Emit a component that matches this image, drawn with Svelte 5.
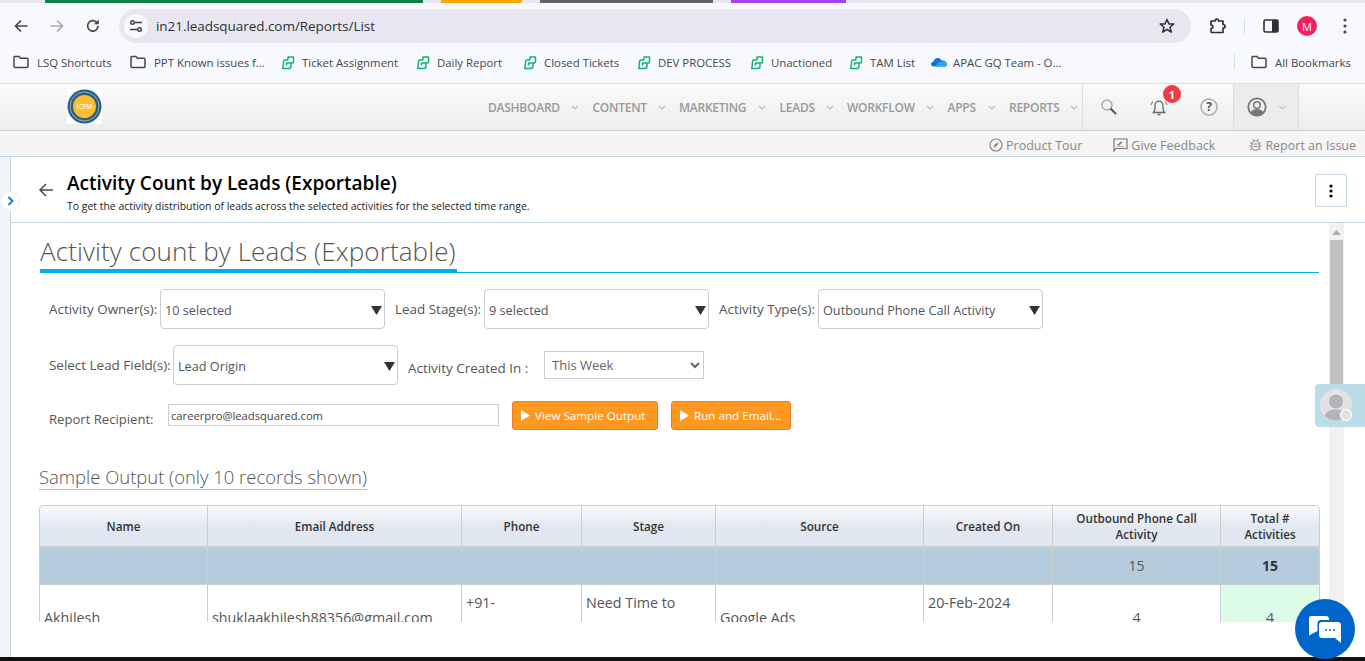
<script>
  const bookmarks = [
    { t: 'LSQ Shortcuts', i: 'folder', w: 74, g: 19 },
    { t: 'PPT Known issues f...', i: 'folder', w: 110, g: 15 },
    { t: 'Ticket Assignment', i: 'green', w: 96, g: 16 },
    { t: 'Daily Report', i: 'green', w: 65, g: 19 },
    { t: 'Closed Tickets', i: 'green', w: 75, g: 16 },
    { t: 'DEV PROCESS', i: 'green', w: 74, g: 16 },
    { t: 'Unactioned', i: 'green', w: 60, g: 16 },
    { t: 'TAM List', i: 'green', w: 45, g: 16 },
    { t: 'APAC GQ Team - O...', i: 'cloud', w: 110, g: 0 }
  ];
  const nav = [
    { t: 'DASHBOARD', w: 72 }, { t: 'CONTENT', w: 54 }, { t: 'MARKETING', w: 68 }, { t: 'LEADS', w: 35 },
    { t: 'WORKFLOW', w: 68 }, { t: 'APPS', w: 29 }, { t: 'REPORTS', w: 50 }
  ];
  const cols = [168, 254, 120, 134, 208, 129, 168, 98];
  const heads = ['Name', 'Email Address', 'Phone', 'Stage', 'Source', 'Created On', 'Outbound Phone Call Activity', 'Total # Activities'];
</script>

{#snippet folder()}
  <svg class="bmi" width="16" height="16" viewBox="0 0 16 16"><path d="M1 3.500C1 2.900 1.400 2.500 2 2.500H6L7.500 4.200H14C14.600 4.200 15 4.600 15 5.200V12.500C15 13.100 14.600 13.500 14 13.500H2C1.400 13.500 1 13.100 1 12.500Z" fill="none" stroke="#45474d" stroke-width="1.500"/></svg>
{/snippet}
{#snippet green()}
  <svg class="bmi gr" width="16" height="16" viewBox="0 0 16 16"><path d="M9 6V3H14.500V7.500C14.500 8.500 14 9 13 9H7.500V11.500M9 6H6.200C5.200 6 4.700 6.500 4.600 7.500L3.800 14.500H9.500C11 14.500 12 13.500 12 12V9" fill="none" stroke="#12b36f" stroke-width="1.500" stroke-linejoin="round"/></svg>
{/snippet}
{#snippet cloud()}
  <svg class="bmi cl" width="16" height="16" viewBox="0 0 16 16"><path d="M3 12.500C1 12.500 0 11.300 0 10C0 8.700 1 7.800 2.300 7.700C2.900 5.500 4.700 4 6.800 4C8.500 4 10 5 10.700 6.500C13.500 6.300 16 8 16 10.500C16 11.700 15.200 12.500 14 12.500Z" fill="#0f78d4"/><path d="M6 12.500C5 11 6 8.500 8.500 8.500C9.500 7.500 11.500 7 13 7.500C15 8 16 9.300 16 10.500C16 11.700 15.200 12.500 14 12.500Z" fill="#28a8ea"/></svg>
{/snippet}
{#snippet tri()}
  <svg class="tri" width="11" height="9" viewBox="0 0 11 9"><path d="M0 0H11L5.500 9Z" fill="#333"/></svg>
{/snippet}
{#snippet play()}
  <svg class="play" width="9" height="11" viewBox="0 0 9 11"><path d="M0 0L9 5.500L0 11Z" fill="#fff"/></svg>
{/snippet}

<div class="page">
  <div class="tabs">
    <i class="seg s1"></i><i class="seg s2"></i><i class="seg s3"></i><i class="seg s4"></i>
  </div>
  <div class="chrome">
    <div class="toolbar">
      <svg class="ci back" width="16" height="16" viewBox="0 0 16 16"><path d="M14.500 8H2.500M8 2.500L2.500 8L8 13.500" fill="none" stroke="#45474d" stroke-width="1.700"/></svg>
      <svg class="ci fwd" width="16" height="16" viewBox="0 0 16 16"><path d="M1.500 8H13.500M8 2.500L13.500 8L8 13.500" fill="none" stroke="#a9a9ae" stroke-width="1.700"/></svg>
      <svg class="ci rel" width="16" height="16" viewBox="0 0 16 16"><path d="M13 8A5.200 5.200 0 1 1 11.600 4.300" fill="none" stroke="#45474d" stroke-width="1.700"/><path d="M13.800 1.500V6.300H9Z" fill="#45474d"/></svg>
      <div class="omni">
        <span class="tune">
          <svg width="16" height="16" viewBox="0 0 16 16"><circle cx="4.500" cy="4.500" r="1.800" fill="none" stroke="#3f4046" stroke-width="1.400"/><path d="M7 4.500H14M2 11.500H9" stroke="#3f4046" stroke-width="1.400"/><circle cx="11.500" cy="11.500" r="1.800" fill="none" stroke="#3f4046" stroke-width="1.400"/></svg>
        </span>
        <span class="url">in21.leadsquared.com/Reports/List</span>
        <svg class="star" width="16" height="16" viewBox="0 0 16 16"><path d="M8 1.500L10 6H14.800L11 9.200L12.300 14.200L8 11.500L3.700 14.200L5 9.200L1.200 6H6Z" fill="none" stroke="#2f3036" stroke-width="1.500" stroke-linejoin="round"/></svg>
      </div>
      <svg class="ci puzzle" width="18" height="18" viewBox="0 0 18 18"><path d="M2 4H6C6 1.500 9.500 1.500 9.500 4H14V7.500C16.800 7.500 16.800 11 14 11V15.500H3C2.400 15.500 2 15.100 2 14.500V11.500C4.500 11.500 4.500 8 2 8Z" fill="none" stroke="#2f3036" stroke-width="1.700" stroke-linejoin="round"/></svg>
      <i class="tsep"></i>
      <svg class="ci panel" width="16" height="16" viewBox="0 0 16 16"><rect x="1" y="2" width="14" height="12" rx="1.500" fill="none" stroke="#2f3036" stroke-width="1.600"/><rect x="9" y="2" width="6" height="12" fill="#2f3036"/></svg>
      <span class="avatar">M</span>
      <svg class="ci dots" width="4" height="16" viewBox="0 0 4 16"><circle cx="2" cy="2" r="1.600" fill="#45474d"/><circle cx="2" cy="8" r="1.600" fill="#45474d"/><circle cx="2" cy="14" r="1.600" fill="#45474d"/></svg>
    </div>
    <div class="bookmarks">
      {#each bookmarks as b}
        <div class="bm" style="margin-right:{b.g}px">
          {#if b.i === 'folder'}{@render folder()}{:else if b.i === 'green'}{@render green()}{:else}{@render cloud()}{/if}
          <span class="bmt" style="width:{b.w}px">{b.t}</span>
        </div>
      {/each}
      <i class="bsep"></i>
      <div class="bm">{@render folder()}<span class="bmt">All Bookmarks</span></div>
    </div>
  </div>

  <header class="appnav">
    <div class="logo">
      <svg width="35" height="35" viewBox="0 0 35 35"><circle cx="17.500" cy="17.500" r="17" fill="#1f5f9a"/><circle cx="17.500" cy="17.500" r="14.500" fill="none" stroke="#d8c25a" stroke-width="0.800"/><circle cx="17.500" cy="17.500" r="11.500" fill="#fdbb2d"/><text x="17.500" y="20" text-anchor="middle" class="logot">ICFM</text></svg>
    </div>
    <nav class="menu">
      {#each nav as n}
        <div class="mi">
          <span class="mt" style="width:{n.w}px">{n.t}</span>
          <svg width="8" height="5" viewBox="0 0 8 5"><path d="M1 1L4 4L7 1" fill="none" stroke="#bbb" stroke-width="1.200"/></svg>
        </div>
      {/each}
    </nav>
    <div class="tools">
      <span class="tool t-search">
        <svg width="18" height="18" viewBox="0 0 18 18"><circle cx="7" cy="7" r="5" fill="none" stroke="#aaa" stroke-width="1.500"/><path d="M10.500 10.500L16 16" stroke="#555" stroke-width="2"/></svg>
      </span>
      <span class="tool t-bell">
        <svg width="20" height="20" viewBox="0 0 20 20"><path d="M4.500 15.500C5.500 14.500 6 13.500 6 11V8.500C6 6 7.800 4.200 10 4.200C12.200 4.200 14 6 14 8.500V11C14 13.500 14.500 14.500 15.500 15.500Z" fill="none" stroke="#666" stroke-width="1.300"/><path d="M8.500 17.500H11.500" stroke="#666" stroke-width="1.500"/><path d="M3.800 4.500L1.800 8M16.200 4.500L18.200 8" stroke="#888" stroke-width="1.200"/></svg>
        <b class="badge">1</b>
      </span>
      <span class="tool t-help">
        <svg width="18" height="18" viewBox="0 0 18 18"><circle cx="9" cy="9" r="8" fill="none" stroke="#aaa" stroke-width="1.500"/><text x="9" y="13" text-anchor="middle" class="qm">?</text></svg>
      </span>
      <span class="profile">
        <svg width="20" height="20" viewBox="0 0 20 20"><circle cx="10" cy="10" r="8.700" fill="#eee" stroke="#777" stroke-width="1.800"/><circle cx="10" cy="8" r="3.300" fill="#eee" stroke="#777" stroke-width="1.500"/><path d="M3.500 15.500C5 12.500 7.500 12 10 12C12.500 12 15 12.500 16.500 15.500C13 20 7 20 3.500 15.500Z" fill="#777"/></svg>
        <svg width="8" height="5" viewBox="0 0 8 5"><path d="M1 1L4 4L7 1" fill="none" stroke="#c4c4c4" stroke-width="1.200"/></svg>
      </span>
    </div>
  </header>

  <div class="subbar">
    <span class="sb a1"><svg width="14" height="14" viewBox="0 0 14 14"><circle cx="7" cy="7" r="6" fill="none" stroke="#888" stroke-width="1.200"/><path d="M9.800 4.200L8 8L4.200 9.800L6 6Z" fill="#888"/></svg>Product Tour</span>
    <span class="sb a2"><svg width="15" height="14" viewBox="0 0 15 14"><path d="M1 1H14V10.500H3L1 13Z" fill="none" stroke="#777" stroke-width="1.200"/><path d="M4 8.500H11M4.500 7L8 3.500L9 4.500L6 7.500Z" fill="#777" stroke="#777" stroke-width="0.500"/></svg>Give Feedback</span>
    <span class="sb a3"><svg width="13" height="14" viewBox="0 0 13 14"><ellipse cx="6.500" cy="7.500" rx="3.800" ry="4.800" fill="none" stroke="#888" stroke-width="1.100"/><path d="M4.500 6H8.500M4.500 8.500H8.500M1 4.500L3 5.500M12 4.500L10 5.500M.5 8H2.700M12.500 8H10.300M1 12L3 10.500M12 12L10 10.500M4.500 2.800L3.800 1M8.500 2.800L9.200 1" stroke="#888" stroke-width="1"/></svg>Report an Issue</span>
  </div>

  <div class="main">
    <aside class="rail"></aside>
    <div class="body">
      <div class="pagehead">
        <svg class="backarrow" width="16" height="16" viewBox="0 0 16 16"><path d="M15 8H2M8 2L2 8L8 14" fill="none" stroke="#444b55" stroke-width="1.500"/></svg>
        <div class="titles">
          <h1>Activity Count by Leads (Exportable)</h1>
          <p>To get the activity distribution of leads across the selected activities for the selected time range.</p>
        </div>
        <button class="kebab" aria-label="More"><svg width="4" height="14" viewBox="0 0 4 14"><circle cx="2" cy="2" r="1.600"/><circle cx="2" cy="7" r="1.600"/><circle cx="2" cy="12" r="1.600"/></svg></button>
      </div>

      <div class="scrollarea">
        <div class="content">
          <h2><span>Activity count by Leads (Exportable)</span></h2>

          <div class="row r1">
            <label for="x">Activity Owner(s):</label>
            <div class="dd w225"><span>10 selected</span>{@render tri()}</div>
            <label for="x" class="l2">Lead Stage(s):</label>
            <div class="dd w225"><span>9 selected</span>{@render tri()}</div>
            <label for="x" class="l2 l3">Activity Type(s):</label>
            <div class="dd w225"><span>Outbound Phone Call Activity</span>{@render tri()}</div>
          </div>

          <div class="row r2">
            <label for="x">Select Lead Field(s):</label>
            <div class="dd w225"><span>Lead Origin</span>{@render tri()}</div>
            <label for="x" class="created">Activity Created In :</label>
            <select class="sel"><option>This Week</option></select>
          </div>

          <div class="row r3">
            <label for="x" class="rr">Report Recipient:</label>
            <input class="inp" value="careerpro@leadsquared.com" />
            <button class="btn b1">{@render play()}View Sample Output</button>
            <button class="btn b2">{@render play()}Run and Email...</button>
          </div>

          <h3><span>Sample Output (only 10 records shown)</span></h3>

          <table>
            <colgroup>{#each cols as c}<col style="width:{c}px" />{/each}</colgroup>
            <thead><tr>{#each heads as h}<th>{h}</th>{/each}</tr></thead>
            <tbody>
              <tr class="sum"><td></td><td></td><td></td><td></td><td></td><td></td><td class="c">15</td><td class="c"><b>15</b></td></tr>
              <tr class="data">
                <td>Akhilesh</td>
                <td>shuklaakhilesh88356@gmail.com</td>
                <td class="top">+91-</td>
                <td class="top">Need Time to</td>
                <td>Google Ads</td>
                <td class="top">20-Feb-2024</td>
                <td class="c">4</td>
                <td class="c green">4</td>
              </tr>
            </tbody>
          </table>
        </div>
        <div class="sbar">
          <svg width="9" height="5" viewBox="0 0 9 5"><path d="M0 5L4.500 0L9 5Z" fill="#aaa"/></svg>
          <i class="thumb"></i>
        </div>
      </div>
    </div>
  </div>
  <div class="blackbar"></div>

  <button class="expander" aria-label="Expand"><svg width="7" height="10" viewBox="0 0 7 10"><path d="M1.500 1L5.500 5L1.500 9" fill="none" stroke="#1477c9" stroke-width="1.800"/></svg></button>
  <div class="agent">
    <svg width="34" height="34" viewBox="0 0 34 34"><circle cx="16" cy="16" r="16" fill="#e2e2e4"/><circle cx="16" cy="12.500" r="7" fill="#b4b4b8"/><path d="M5 27C6 22 10 20.500 16 20.500C22 20.500 26 22 27 27C21 33 11 33 5 27Z" fill="#b4b4b8"/><circle cx="26" cy="26" r="5.500" fill="#e2e2e4" stroke="#fff" stroke-width="1.200"/></svg>
  </div>
  <button class="chat" aria-label="Chat">
    <svg width="32" height="27" viewBox="0 0 32 27"><path d="M3 0H18C19.700 0 21 1.300 21 3V4H13C11 4 9.500 5.500 9.500 7.500V15L1 19.500V3C1 1.300 1.500 0 3 0Z" fill="#fff" transform="translate(-1 0)"/><path d="M13 6H29C30.700 6 32 7.300 32 9V27L26 22H13C11.300 22 10 20.700 10 19V9C10 7.300 11.300 6 13 6Z" fill="#fff"/><circle cx="17" cy="14" r="1" fill="#0066cc"/><circle cx="21" cy="14" r="1" fill="#0066cc"/><circle cx="25" cy="14" r="1" fill="#0066cc"/></svg>
  </button>
</div>

<style>
  :global(body) { margin: 0; background: #fff; }
  .page { position: relative; width: 1365px; height: 661px; overflow: hidden; display: flex; flex-direction: column; background: #fff; font-family: "Open Sans", "Liberation Sans", sans-serif; color: #555; }

  .tabs { height: 3px; background: #e8e7f1; display: flex; flex: none; }
  .seg { display: block; height: 3px; }
  .s1 { width: 378px; margin-left: 45px; background: #0d8148; }
  .s2 { width: 81px; margin-left: 18px; background: #ffa800; }
  .s3 { width: 173px; margin-left: 18px; background: #5f6368; }
  .s4 { width: 115px; margin-left: 18px; background: #a142f4; }

  .chrome { background: #f8f8ff; height: 80px; flex: none; border-bottom: 1px solid #dfdfe3; box-sizing: content-box; }
  .toolbar { height: 40px; display: flex; align-items: center; padding-top: 6px; box-sizing: border-box; }
  .ci { flex: none; }
  .back { margin-left: 13px; }
  .fwd { margin-left: 20px; }
  .rel { margin-left: 20px; }
  .omni { margin-left: 18px; width: 1072px; height: 34px; border-radius: 17px; background: #e8e7f1; display: flex; align-items: center; }
  .tune { width: 24px; height: 24px; border-radius: 50%; background: #f8f8ff; margin-left: 5px; display: flex; align-items: center; justify-content: center; }
  .url { margin-left: 8px; font-size: 13.500px; color: #2f3036; flex: 1; letter-spacing: -0.050px; }
  .star { margin-right: 16px; }
  .puzzle { margin-left: 18px; }
  .tsep { width: 1px; height: 16px; background: #d4dcee; margin-left: 17px; }
  .panel { margin-left: 18px; }
  .avatar { width: 20px; height: 20px; border-radius: 50%; background: #f41f5f; color: #fff; font-size: 11px; display: flex; align-items: center; justify-content: center; margin-left: 18px; flex: none; }
  .dots { margin-left: 26px; }

  .bookmarks { height: 40px; display: flex; align-items: center; padding: 0 0 2px 13px; box-sizing: border-box; }
  .bm { display: flex; align-items: center; gap: 8px; }
  .bmi { flex: none; }
  .gr { margin-right: -1px; }
  .cl { margin-right: -2px; }
  .bmt { font-size: 11.400px; color: #45474d; white-space: nowrap; }
  .bsep { width: 1px; height: 16px; background: #d4dcee; margin-left: 171px; margin-right: 16px; }

  .appnav { height: 47px; flex: none; display: flex; align-items: stretch; background: linear-gradient(#fafafa, #ededed); border-bottom: 1px solid #cfcfcf; box-sizing: border-box; position: relative; }
  .logo { width: 35px; height: 35px; background: #fff; margin: 5px 0 0 67px; flex: none; }
  .logot { font-family: "Open Sans", sans-serif; font-size: 6.500px; fill: #fff; font-weight: 600; }
  .menu { display: flex; margin-left: 386px; align-items: center; }
  .mi { display: flex; align-items: center; }
  .mi svg { margin: 1px 13.500px 0 11px; }
  .mi:last-child svg { margin-right: 4px; }
  .mt { font-size: 12px; color: #999; font-weight: 600; white-space: nowrap; letter-spacing: -0.250px; }
  .tools { display: flex; align-items: stretch; border-left: 1px solid #ddd; }
  .tool { display: flex; align-items: center; justify-content: center; position: relative; }
  .t-search { width: 51px; }
  .t-bell { width: 50px; }
  .t-help { width: 49px; }
  .badge { position: absolute; left: 29px; top: 1px; width: 18px; height: 18px; border-radius: 50%; background: #ed3b43; color: #fff; font-size: 11px; font-weight: 700; display: flex; align-items: center; justify-content: center; }
  .qm { font-family: "Open Sans", sans-serif; font-weight: 700; font-size: 12px; fill: #555; }
  .profile { width: 66px; background: #ececec; border-left: 1px solid #ddd; border-right: 1px solid #ddd; display: flex; align-items: center; box-sizing: border-box; padding-left: 13px; gap: 11px; }

  .subbar { height: 26px; flex: none; background: #f5f5f5; border-bottom: 1px solid #c5d5e0; box-sizing: border-box; display: flex; align-items: center; font-size: 12.500px; color: #888; padding: 3px 0 0 989px; }
  .sb { display: flex; align-items: center; gap: 3px; white-space: nowrap; }
  .a2 { margin-left: 31px; }
  .a3 { margin-left: 34px; }

  .main { flex: 1; min-height: 0; display: flex; }
  .rail { width: 10px; background: #f1f5f9; border-right: 1px solid #c5d5e0; flex: none; }
  .body { flex: 1; min-width: 0; display: flex; flex-direction: column; }

  .pagehead { height: 66px; flex: none; border-bottom: 1px solid #c5d5e0; box-sizing: border-box; display: flex; align-items: flex-start; position: relative; padding-left: 27px; }
  .backarrow { margin-top: 25px; flex: none; }
  .titles { margin-left: 13px; margin-top: 15px; flex: 1; }
  h1 { font-size: 19px; line-height: 22px; font-weight: 600; color: #000; margin: 0; }
  p { font-size: 10.450px; line-height: 14px; margin: 5px 0 0; color: #222; }
  .kebab { width: 32px; height: 33px; margin: 17px 18px 0 0; background: #fff; border: 1px solid #c5d5e0; border-radius: 2px; padding: 0; display: flex; align-items: center; justify-content: center; }

  .scrollarea { height: 399px; flex: none; display: flex; overflow: hidden; }
  .content { width: 1318px; flex: none; overflow: hidden; padding-left: 28px; box-sizing: border-box; }
  h2 { margin: 0 0 0 1px; height: 50px; border-bottom: 1px solid #00aeef; box-sizing: border-box; font-weight: 300; font-size: 26px; color: #555; width: 1279px; white-space: nowrap; display: flex; }
  h2 span { display: block; width: 417px; border-bottom: 4px solid #00aeef; box-sizing: content-box; height: 46px; letter-spacing: 0.110px; line-height: 57px; margin-bottom: -1px; }
  .row { display: flex; align-items: center; padding-left: 10px; }
  label { font-size: 13.450px; color: #555; white-space: nowrap; }
  .r1 { margin-top: 16px; height: 40px; }
  .r1 label { width: 111px; }
  .r1 .l2 { margin-left: 10px; width: 89px; }
  .r1 .l3 { width: 99px; }
  .dd { height: 40px; box-sizing: border-box; border: 1px solid #ccc; border-radius: 4px; background: #fff; display: flex; align-items: center; justify-content: space-between; padding: 0 0 0 4px; font-size: 12.700px; color: #555; }
  .dd span { margin-top: 2px; }
  .tri { margin: 3px 2px 0 0; }
  .w225 { width: 225px; }
  .r2 { margin-top: 16px; height: 40px; }
  .r2 label { width: 124px; }
  .r2 .created { width: 136px; margin: 6px 0 0 10px; }
  .sel { width: 160px; height: 28px; border: 1px solid #ccc; border-radius: 0; background: #fff; font-family: inherit; font-size: 13px; color: #666; padding-left: 3px; }
  .r3 { margin-top: 16px; height: 29px; }
  .r3 .rr { width: 119px; margin-top: 6px; font-size: 13.100px; }
  .inp { width: 331px; height: 22px; margin-top: -1px; box-sizing: border-box; border: 1px solid #ccc; background: #fff; padding: 0 2px; font-family: inherit; font-size: 11.200px; color: #444; }
  .btn { height: 29px; box-sizing: border-box; background: #ff9820; border: 1px solid #ef7d28; border-radius: 3px; color: #fff; font-family: inherit; font-size: 11.650px; font-weight: 400; padding: 0 0 1px 8px; display: flex; align-items: center; gap: 5px; white-space: nowrap; }
  .play { margin-top: 1px; }
  .b1 { width: 146px; margin-left: 13px; }
  .b2 { width: 120px; margin-left: 13px; }
  h3 { margin: 33px 0 0; height: 28px; }
  h3 span { display: inline-block; font-weight: 300; font-size: 18.450px; color: #555; line-height: 28px; height: 26px; width: 328px; border-bottom: 1px solid #bbb; white-space: nowrap; }

  table { margin-top: 14px; border-collapse: separate; border-spacing: 0; table-layout: fixed; width: 1280px; border-top: 1px solid #ccc; border-left: 1px solid #ccc; border-right: 1px solid #ccc; border-radius: 5px 5px 0 0; }
  th { height: 42px; padding: 0 8px; background: linear-gradient(#f9fafc, #e0e7f1 55%); font-size: 11.700px; font-weight: 600; color: #333; border-right: 1px solid #ccc; border-bottom: 2px solid #ccc; box-sizing: border-box; line-height: 16px; }
  th:last-child, td:last-child { border-right: 0; }
  th:first-child { border-top-left-radius: 5px; }
  th:last-child { border-top-right-radius: 5px; }
  td { font-size: 14.300px; color: #555; border-right: 1px solid #ccc; padding: 0 4px; box-sizing: border-box; white-space: nowrap; overflow: hidden; }
  .sum td { height: 37px; background: #b5ccdc; border-bottom: 1px solid #ccc; color: #555; font-size: 14px; padding-bottom: 2px; }
  .sum b { color: #333; font-weight: 700; }
  .data td { height: 64px; }
  .data .top { vertical-align: top; padding-top: 8px; }
  .c { text-align: center; }
  .green { background: #dcfce7; }

  .sbar { width: 15px; background: #f1f1f1; display: flex; flex-direction: column; align-items: center; flex: none; padding-top: 7px; box-sizing: border-box; }
  .thumb { display: block; width: 13px; height: 144px; background: #c1c1c1; margin-top: 5px; }
  .blackbar { height: 4px; flex: none; background: #111; }

  .expander { position: absolute; left: 0; top: 191px; width: 20px; height: 20px; border-radius: 50%; background: #fff; border: 1px solid #eef1f5; padding: 0; display: flex; align-items: center; justify-content: center; box-sizing: border-box; }
  .agent { position: absolute; right: 0; top: 384px; width: 50px; height: 43px; background: #bbdde8; border-radius: 4px 0 0 4px; display: flex; align-items: center; padding-left: 5px; box-sizing: border-box; }
  .chat { position: absolute; left: 1295px; top: 599px; width: 60px; height: 60px; border: 0; border-radius: 50%; background: #0066cc; padding: 0; display: flex; align-items: center; justify-content: center; }
</style>
